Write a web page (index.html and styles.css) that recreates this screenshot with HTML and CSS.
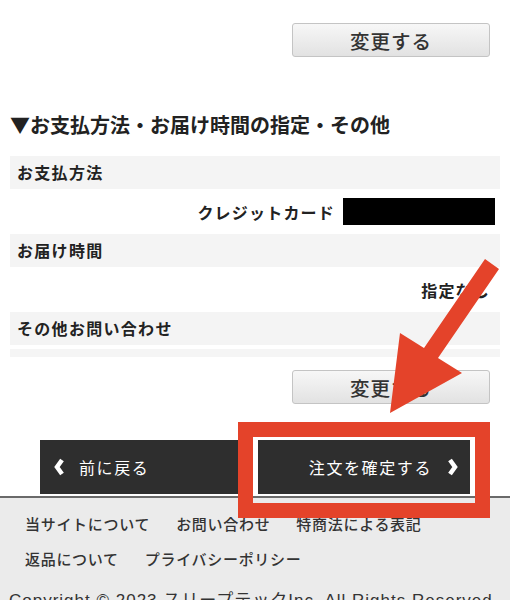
FILE: index.html
```html
<!DOCTYPE html>
<html lang="ja">
<head>
    <meta charset="UTF-8">
    <meta name="viewport" content="width=device-width, initial-scale=1.0">
    <title>ご注文内容の確認</title>
    <link rel="stylesheet" href="styles.css">
</head>
<body>
    <div class="page">
        <div class="btn-row first">
            <button class="change-btn">変更する</button>
        </div>

        <h2 class="section-title">▼お支払方法・お届け時間の指定・その他</h2>
        <dl class="info">
            <dt>お支払方法</dt>
            <dd class="card"><span>クレジットカード</span><span class="masked"></span></dd>
            <dt>お届け時間</dt>
            <dd>指定なし</dd>
            <dt>その他お問い合わせ</dt>
            <dd class="empty"></dd>
        </dl>

        <div class="btn-row">
            <button class="change-btn">変更する</button>
        </div>

        <nav class="step-nav">
            <a href="#" class="step back">
                <svg class="chev" width="10" height="18" viewBox="0 0 10 18"><polyline points="8,2 3,9 8,16" /></svg>
                前に戻る
            </a>
            <a href="#" class="step confirm">
                注文を確定する
                <svg class="chev" width="10" height="18" viewBox="0 0 10 18"><polyline points="2,2 7,9 2,16" /></svg>
            </a>
        </nav>

        <!-- annotation drawn over the screenshot -->
        <div class="highlight"></div>
        <svg class="arrow" width="510" height="600" viewBox="0 0 510 600">
            <polygon points="485,259 424,348 400,333 390,413 462,373 438,358 499,269" />
        </svg>
    </div>

    <footer class="footer">
        <ul class="footer-links">
            <li><a href="#">当サイトについて</a></li>
            <li><a href="#">お問い合わせ</a></li>
            <li><a href="#">特商法による表記</a></li>
            <li><a href="#">返品について</a></li>
            <li><a href="#">プライバシーポリシー</a></li>
        </ul>
        <p class="copyright">Copyright © 2023 スリープテックInc. All Rights Reserved</p>
    </footer>
</body>
</html>
```

FILE: styles.css
```css
body {
    margin: 0;
    padding: 0;
    font-family: "Noto Sans CJK JP", "Noto Sans", sans-serif;
    color: #222;
    background: #fff;
    overflow: hidden;
}
.page {
    position: relative;
    padding: 0 10px;
}
.btn-row {
    display: flex;
    justify-content: flex-end;
    padding-right: 10px;
    margin-top: 13px;
}
.btn-row.first {
    margin-top: 0;
    padding-top: 23px;
}
.change-btn {
    width: 198px;
    height: 34px;
    border: 1px solid #c4c4c4;
    border-radius: 3px;
    background: linear-gradient(to bottom, #f7f7f7, #e2e2e2);
    font-family: inherit;
    font-size: 19.5px;
    font-weight: 500;
    color: #333;
    letter-spacing: 1px;
    padding: 0;
}
.section-title {
    margin: 54px 0 0;
    font-size: 20px;
    line-height: 28px;
    font-weight: bold;
    color: #222;
}
.info {
    margin: 17px 0 0;
}
.info dt {
    background: #f4f4f4;
    height: 33px;
    line-height: 33px;
    padding-left: 7px;
    font-size: 16px;
    font-weight: bold;
    letter-spacing: 1.3px;
}
.info dd {
    margin: 0;
    height: 45px;
    display: flex;
    align-items: center;
    justify-content: flex-end;
    padding-right: 10px;
    font-size: 16px;
    font-weight: bold;
    letter-spacing: 1.2px;
}
.info dd.card {
    padding-right: 5px;
}
.masked {
    display: inline-block;
    width: 152px;
    height: 27px;
    background: #000;
    margin-left: 8px;
}
.info dd.empty {
    height: 8px;
    margin-top: 4px;
    background: #f5f5f5;
}
.step-nav {
    display: flex;
    gap: 10px;
    margin: 36px 0 0 30px;
    width: 430px;
}
.step {
    height: 54px;
    background: #2e2e2e;
    color: #fff;
    text-decoration: none;
    font-size: 16px;
    letter-spacing: 1.6px;
    display: flex;
    align-items: center;
    gap: 15px;
}
.step.back {
    width: 208px;
    padding-left: 14px;
    box-sizing: border-box;
}
.step.confirm {
    flex: 1;
    justify-content: flex-end;
    padding-right: 12px;
    gap: 16px;
}
.chev polyline {
    fill: none;
    stroke: #fff;
    stroke-width: 4.5;
}
.highlight {
    position: absolute;
    left: 238px;
    top: 422px;
    width: 252px;
    height: 96px;
    box-sizing: border-box;
    border: 15px solid #e4432a;
    z-index: 5;
}
.arrow {
    position: absolute;
    left: 0;
    top: 0;
    z-index: 6;
}
.arrow polygon {
    fill: #e4432a;
}
.footer {
    margin-top: 2px;
    border-top: 2px solid #6a6a6a;
    background: #ebebeb;
    padding: 8px 0 0;
}
.footer-links {
    list-style: none;
    margin: 0;
    padding: 0 20px 0 25px;
    display: flex;
    flex-wrap: wrap;
    column-gap: 26px;
}
.footer-links li {
    line-height: 34px;
}
.footer-links a {
    color: #333;
    text-decoration: none;
    font-size: 15px;
    font-weight: 500;
    letter-spacing: 0.7px;
}
.copyright {
    margin: 0;
    padding: 15px 0 0 9px;
    font-family: "Liberation Sans", "Noto Sans CJK JP", sans-serif;
    font-size: 17px;
    letter-spacing: 1px;
    color: #333;
    white-space: nowrap;
    line-height: 20px;
}
```
